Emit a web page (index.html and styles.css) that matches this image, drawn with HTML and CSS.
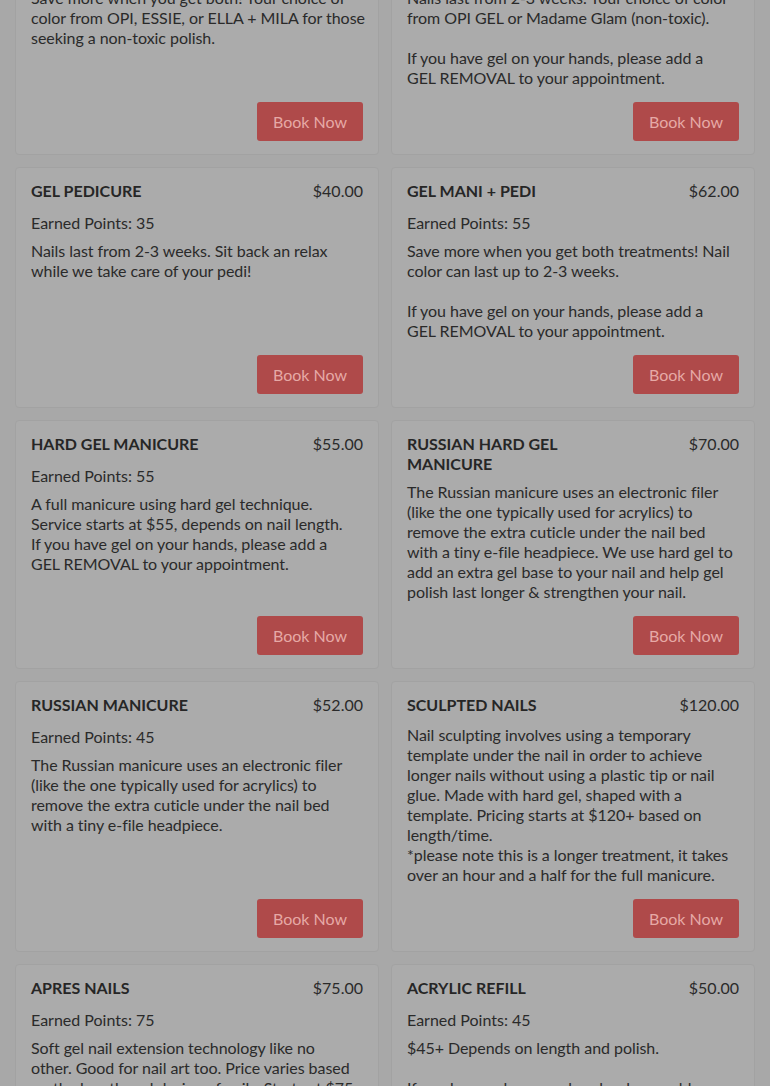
FILE: index.html
```html
<!DOCTYPE html>
<html lang="en">
<head>
<meta charset="utf-8">
<title>Services</title>
<link rel="stylesheet" href="styles.css">
</head>
<body>
<main class="services">
  <div class="card">
    <div class="card-head"><h3 class="title">MANI + PEDI</h3><span class="price">$55.00</span></div>
    <p class="points">Earned Points: 55</p>
    <p class="desc">Save more when you get both! Your choice of<br>color from OPI, ESSIE, or ELLA + MILA for those<br>seeking a non-toxic polish.</p>
    <button class="book">Book Now</button>
  </div>
  <div class="card">
    <div class="card-head"><h3 class="title">GEL MANICURE</h3><span class="price">$35.00</span></div>
    <p class="points">Earned Points: 35</p>
    <p class="desc">Nails last from 2-3 weeks. Your choice of color<br>from OPI GEL or Madame Glam (non-toxic).<br><br>If you have gel on your hands, please add a<br>GEL REMOVAL to your appointment.</p>
    <button class="book">Book Now</button>
  </div>

  <div class="card">
    <div class="card-head"><h3 class="title">GEL PEDICURE</h3><span class="price">$40.00</span></div>
    <p class="points">Earned Points: 35</p>
    <p class="desc">Nails last from 2-3 weeks. Sit back an relax<br>while we take care of your pedi!</p>
    <button class="book">Book Now</button>
  </div>
  <div class="card">
    <div class="card-head"><h3 class="title">GEL MANI + PEDI</h3><span class="price">$62.00</span></div>
    <p class="points">Earned Points: 55</p>
    <p class="desc">Save more when you get both treatments! Nail<br>color can last up to 2-3 weeks.<br><br>If you have gel on your hands, please add a<br>GEL REMOVAL to your appointment.</p>
    <button class="book">Book Now</button>
  </div>

  <div class="card">
    <div class="card-head"><h3 class="title">HARD GEL MANICURE</h3><span class="price">$55.00</span></div>
    <p class="points">Earned Points: 55</p>
    <p class="desc">A full manicure using hard gel technique.<br>Service starts at $55, depends on nail length.<br>If you have gel on your hands, please add a<br>GEL REMOVAL to your appointment.</p>
    <button class="book">Book Now</button>
  </div>
  <div class="card">
    <div class="card-head"><h3 class="title">RUSSIAN HARD GEL<br>MANICURE</h3><span class="price">$70.00</span></div>
    <p class="desc">The Russian manicure uses an electronic filer<br>(like the one typically used for acrylics) to<br>remove the extra cuticle under the nail bed<br>with a tiny e-file headpiece. We use hard gel to<br>add an extra gel base to your nail and help gel<br>polish last longer &amp; strengthen your nail.</p>
    <button class="book">Book Now</button>
  </div>

  <div class="card">
    <div class="card-head"><h3 class="title">RUSSIAN MANICURE</h3><span class="price">$52.00</span></div>
    <p class="points">Earned Points: 45</p>
    <p class="desc">The Russian manicure uses an electronic filer<br>(like the one typically used for acrylics) to<br>remove the extra cuticle under the nail bed<br>with a tiny e-file headpiece.</p>
    <button class="book">Book Now</button>
  </div>
  <div class="card">
    <div class="card-head"><h3 class="title">SCULPTED NAILS</h3><span class="price">$120.00</span></div>
    <p class="desc desc-wide">Nail sculpting involves using a temporary<br>template under the nail in order to achieve<br>longer nails without using a plastic tip or nail<br>glue. Made with hard gel, shaped with a<br>template. Pricing starts at $120+ based on<br>length/time.<br>*please note this is a longer treatment, it takes<br>over an hour and a half for the full manicure.</p>
    <button class="book">Book Now</button>
  </div>

  <div class="card">
    <div class="card-head"><h3 class="title">APRES NAILS</h3><span class="price">$75.00</span></div>
    <p class="points">Earned Points: 75</p>
    <p class="desc">Soft gel nail extension technology like no<br>other. Good for nail art too. Price varies based<br>on the length and design of nails. Starts at $75.</p>
    <button class="book">Book Now</button>
  </div>
  <div class="card">
    <div class="card-head"><h3 class="title">ACRYLIC REFILL</h3><span class="price">$50.00</span></div>
    <p class="points">Earned Points: 45</p>
    <p class="desc">$45+ Depends on length and polish.<br><br>If you have gel on your hands, please add a<br>GEL REMOVAL to your appointment.</p>
    <button class="book">Book Now</button>
  </div>
</main>
</body>
</html>
```
FILE: styles.css
```css
html, body {
  margin: 0;
  padding: 0;
}
body {
  height: 1086px;
  overflow: hidden;
  background: #a8a8a8;
  color: #2a2a2a;
  font-family: Lato, "Open Sans", Arial, sans-serif;
  font-size: 16px;
  line-height: 20px;
}
.services {
  display: grid;
  grid-template-columns: repeat(2, minmax(0, 1fr));
  gap: 12px;
  padding: 0 15px;
  margin-top: -86px;
}
.card {
  display: flex;
  flex-direction: column;
  min-width: 0;
  background: #ababab;
  border: 1px solid #a2a2a2;
  border-radius: 4px;
  padding: 13px 15px 13px;
}
.card-head {
  display: flex;
  justify-content: space-between;
  align-items: flex-start;
  gap: 12px;
}
.title {
  margin: 0;
  font-size: 16px;
  line-height: 20px;
  font-weight: 700;
  max-width: 60%;
  color: #262626;
}
.price {
  white-space: nowrap;
}
.points {
  margin: 12px 0 0;
}
.desc {
  margin: 8px 0 14px;
  white-space: nowrap;
  letter-spacing: -0.05px;
}
.desc-wide {
  margin-top: 10px;
}
.book {
  align-self: flex-end;
  margin-top: auto;
  height: 39px;
  padding: 0 16px;
  border: 0;
  border-radius: 3px;
  background: #af4a4a;
  color: #e6a9a6;
  font-family: inherit;
  font-size: 16px;
  cursor: pointer;
}
```
